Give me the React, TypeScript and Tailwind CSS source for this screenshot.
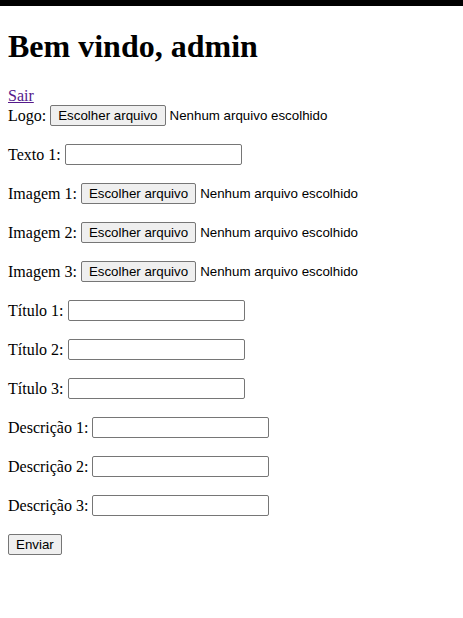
function FakeFile() {
  return (
    <>
      <button
        type="button"
        className="h-[21px] px-[7px] border border-[#767676] rounded-[2px] bg-[#efefef] text-[13.333px] leading-none text-black font-['Liberation_Sans',Arial,sans-serif]"
      >
        Escolher arquivo
      </button>
      <span className="text-[13.333px] text-black font-['Liberation_Sans',Arial,sans-serif]">
        Nenhum arquivo escolhido
      </span>
    </>
  );
}

function TextField() {
  return (
    <input
      type="text"
      className="w-[177px] h-[21px] border border-[#767676] rounded-[2px] bg-white px-[2px] text-[13.333px] outline-none"
    />
  );
}

const rows: { label: string; kind: "file" | "text" }[] = [
  { label: "Logo", kind: "file" },
  { label: "Texto 1", kind: "text" },
  { label: "Imagem 1", kind: "file" },
  { label: "Imagem 2", kind: "file" },
  { label: "Imagem 3", kind: "file" },
  { label: "Título 1", kind: "text" },
  { label: "Título 2", kind: "text" },
  { label: "Título 3", kind: "text" },
  { label: "Descrição 1", kind: "text" },
  { label: "Descrição 2", kind: "text" },
  { label: "Descrição 3", kind: "text" },
];

export default function App() {
  return (
    <div className="min-h-[618px] bg-white text-black font-['Liberation_Serif','Times_New_Roman',serif] text-base">
      <div className="h-[6px] bg-black" />
      <div className="px-2">
        <h1 className="mt-[21.5px] text-[32px] leading-[37px] font-bold">
          Bem vindo, admin
        </h1>
        <a href="#" className="block mt-[23.5px] leading-[16px] text-[#551a8b] underline">
          Sair
        </a>
        <form className="flex flex-col gap-4" onSubmit={(e) => e.preventDefault()}>
          {rows.map((r) => (
            <div key={r.label} className="flex items-center gap-1 h-[23px]">
              <label className="leading-[18px] pt-[0px]">{r.label}:</label>
              {r.kind === "file" ? <FakeFile /> : <TextField />}
            </div>
          ))}
          <div className="flex items-center h-[23px]">
            <button
              type="submit"
              className="h-[21px] px-[7px] border border-[#767676] rounded-[2px] bg-[#efefef] text-[13.333px] leading-none font-['Liberation_Sans',Arial,sans-serif]"
            >
              Enviar
            </button>
          </div>
        </form>
      </div>
    </div>
  );
}
